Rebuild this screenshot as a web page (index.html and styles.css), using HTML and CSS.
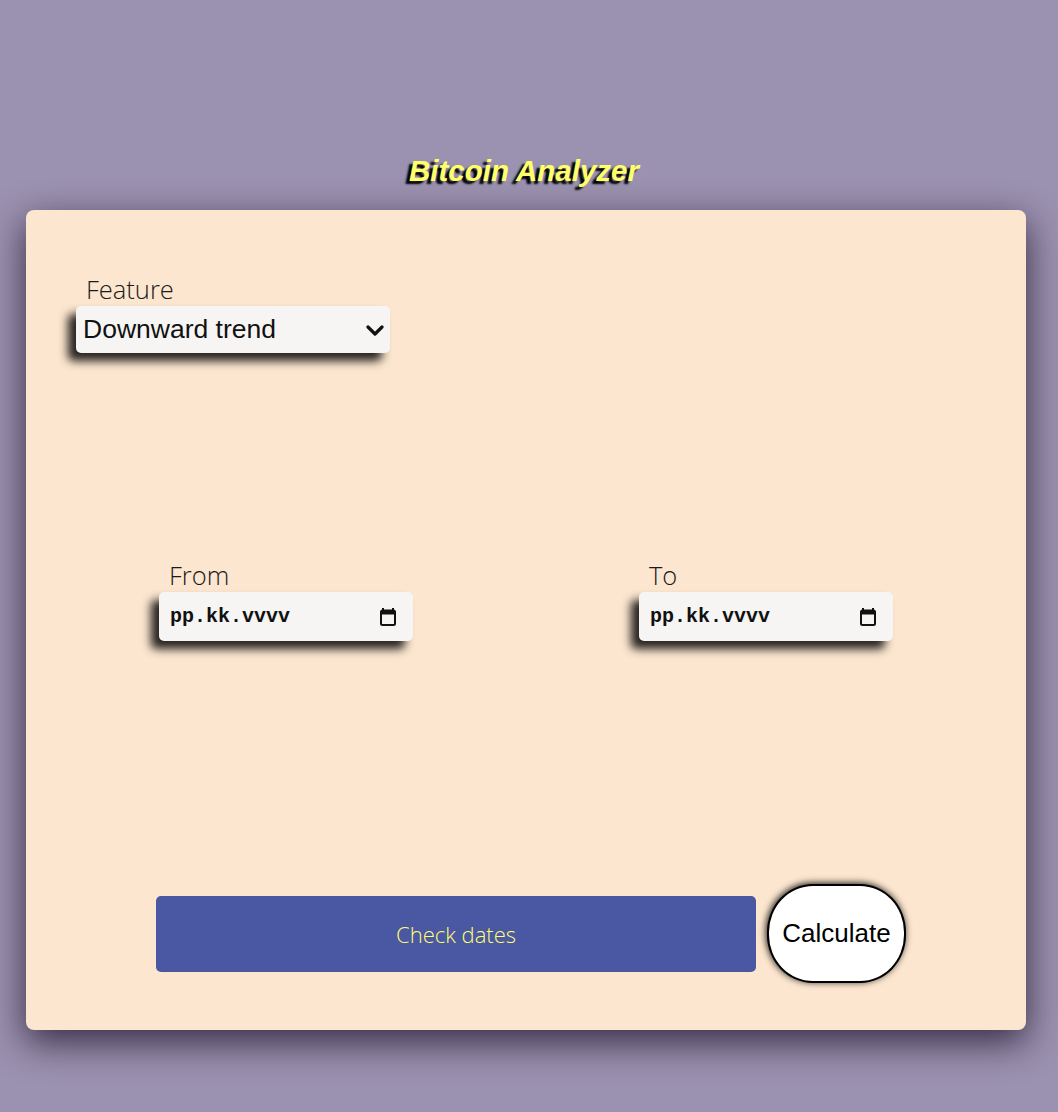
FILE: index.html
```html
<!DOCTYPE html>
<html lang="fi">
<head>
<meta charset="utf-8">
<title>Bitcoin Analyzer</title>
<link rel="stylesheet" href="styles.css">
</head>
<body>
<h1 class="title">Bitcoin Analyzer</h1>
<main class="card">
  <section class="feature">
    <label class="label">Feature</label>
    <div class="select">
      <span class="select-text">Downward trend</span>
      <svg class="chevron" width="18" height="12" viewBox="0 0 18 12"><path d="M2 2 L9 9 L16 2" fill="none" stroke="#111" stroke-width="3.2" stroke-linecap="round" stroke-linejoin="round"/></svg>
    </div>
  </section>
  <section class="dates">
    <div class="date-col">
      <div class="date-field">
        <label class="label">From</label>
        <div class="date-input">
          <span class="date-text">pp.kk.vvvv</span>
          <svg class="cal" width="18" height="20" viewBox="0 0 18 20"><path d="M4 1v3M14 1v3" stroke="#111" stroke-width="2"/><rect x="2" y="3.5" width="14" height="14.5" rx="1.5" fill="none" stroke="#111" stroke-width="2"/><rect x="2" y="3.5" width="14" height="4" fill="#111"/></svg>
        </div>
      </div>
    </div>
    <div class="date-col">
      <div class="date-field">
        <label class="label">To</label>
        <div class="date-input">
          <span class="date-text">pp.kk.vvvv</span>
          <svg class="cal" width="18" height="20" viewBox="0 0 18 20"><path d="M4 1v3M14 1v3" stroke="#111" stroke-width="2"/><rect x="2" y="3.5" width="14" height="14.5" rx="1.5" fill="none" stroke="#111" stroke-width="2"/><rect x="2" y="3.5" width="14" height="4" fill="#111"/></svg>
        </div>
      </div>
    </div>
  </section>
  <section class="actions">
    <button class="check">Check dates</button>
    <button class="calc">Calculate</button>
  </section>
</main>
</body>
</html>
```

FILE: styles.css
```css
html, body {
  margin: 0;
  padding: 0;
}
body {
  background: #9b91b0;
  min-height: 1112px;
  font-family: "Open Sans", sans-serif;
  padding-top: 150px;
  box-sizing: border-box;
}
.title {
  margin: 0 0 20px 0;
  height: 40px;
  line-height: 42px;
  text-align: center;
  font-family: "Liberation Sans", Arial, sans-serif;
  font-style: italic;
  font-weight: bold;
  font-size: 29.5px;
  color: #ffff66;
  text-shadow: -4px 3px 2px #000;
  padding-right: 10px;
}
.card {
  margin: 0 32px 0 26px;
  height: 820px;
  background: #fce6cf;
  border-radius: 8px;
  box-shadow: 0 12px 36px rgba(20, 10, 30, 0.75);
  padding: 64px 20px 0 20px;
  box-sizing: border-box;
  display: flex;
  flex-direction: column;
}
.label {
  display: block;
  font-family: "Open Sans", sans-serif;
  font-weight: 300;
  font-size: 25.5px;
  line-height: 30px;
  color: #1a1a1a;
  margin-left: 10px;
  margin-bottom: 2px;
}
.feature {
  padding-left: 30px;
}
.select {
  width: 314px;
  height: 47px;
  background: #f6f5f4;
  border-radius: 5px;
  box-shadow: -8px 8px 10px rgba(0, 0, 0, 0.85);
  display: flex;
  align-items: center;
  justify-content: space-between;
  padding: 0 6px 0 7px;
  box-sizing: border-box;
}
.select-text {
  font-family: "Liberation Sans", Arial, sans-serif;
  font-size: 26.5px;
  color: #111;
}
.chevron {
  margin-top: 2px;
}
.dates {
  margin-top: 207px;
  display: grid;
  grid-template-columns: 1fr 1fr;
}
.date-col {
  display: flex;
  justify-content: center;
}
.date-input {
  width: 254px;
  height: 49px;
  background: #f6f5f4;
  border-radius: 5px;
  box-shadow: -8px 8px 10px rgba(0, 0, 0, 0.85);
  display: flex;
  align-items: center;
  justify-content: space-between;
  padding: 0 16px 0 11px;
  box-sizing: border-box;
}
.date-text {
  font-family: "Liberation Mono", "Courier New", monospace;
  font-weight: bold;
  font-size: 20px;
  color: #111;
}
.actions {
  margin-top: 243px;
  display: flex;
  align-items: center;
  padding-left: 110px;
}
.check {
  width: 600px;
  height: 76px;
  background: #4a57a3;
  border: none;
  border-radius: 5px;
  color: #ffff70;
  font-family: "Open Sans", sans-serif;
  font-weight: 300;
  font-size: 22px;
  padding: 0;
}
.calc {
  margin-left: 11px;
  width: 139px;
  height: 99px;
  background: #fff;
  border: 2px solid #000;
  border-radius: 46px / 48px;
  color: #000;
  font-family: "Liberation Sans", Arial, sans-serif;
  font-size: 26px;
  padding: 0;
  box-shadow: -1px -1px 7px rgba(0, 0, 0, 0.9);
}
```
